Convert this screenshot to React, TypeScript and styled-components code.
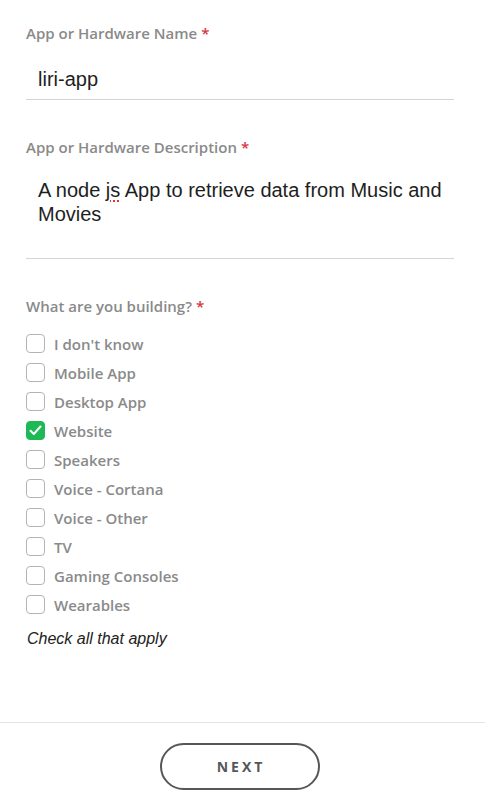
import React from "react";
import styled, { createGlobalStyle } from "styled-components";

const GlobalStyle = createGlobalStyle`
  html, body {
    margin: 0;
    padding: 0;
    background: #ffffff;
  }
  body {
    font-family: "Open Sans", "Liberation Sans", Arial, sans-serif;
    -webkit-font-smoothing: antialiased;
  }
`;

const Page = styled.div`
  width: 485px;
  height: 795px;
  display: flex;
  flex-direction: column;
  overflow: hidden;
`;

const Form = styled.form`
  display: flex;
  flex-direction: column;
  padding: 23px 31px 0 26px;
`;

const Field = styled.div<{ $gap?: number }>`
  display: flex;
  flex-direction: column;
  margin-top: ${(p) => p.$gap ?? 0}px;
`;

const Label = styled.label`
  font-size: 15px;
  line-height: 20px;
  font-weight: 600;
  color: #8a8a8a;
`;

const Required = styled.span`
  color: #d6343c;
  margin-left: 4px;
`;

const Input = styled.div`
  padding: 24px 12px 8px;
  font-family: "Liberation Sans", Arial, sans-serif;
  font-size: 20px;
  line-height: 24px;
  color: #1e1e1e;
  border-bottom: 1px solid #d4d4d4;
`;

const TextArea = styled(Input)`
  padding: 21px 12px 32px;
`;

const Misspelled = styled.span`
  text-decoration: underline dotted #e0353b;
  text-decoration-thickness: 2px;
  text-underline-offset: 3px;
`;

const OptionList = styled.ul`
  list-style: none;
  margin: 13px 0 0;
  padding: 0;
  display: flex;
  flex-direction: column;
`;

const Option = styled.li`
  display: flex;
  align-items: center;
  gap: 9px;
  height: 29px;
  font-size: 15px;
  font-weight: 600;
  color: #8a8a8a;
`;

const Box = styled.span<{ $checked?: boolean }>`
  width: 19px;
  height: 19px;
  box-sizing: border-box;
  border-radius: 4px;
  border: 1px solid ${(p) => (p.$checked ? "#1db954" : "#b4b4b4")};
  background: ${(p) => (p.$checked ? "#1db954" : "#ffffff")};
  display: flex;
  align-items: center;
  justify-content: center;
  flex-shrink: 0;
`;

const Helper = styled.p`
  margin: 10px 0 0 1px;
  font-family: "Liberation Sans", Arial, sans-serif;
  font-size: 16px;
  line-height: 20px;
  font-style: italic;
  color: #222222;
`;

const Footer = styled.div`
  margin-top: auto;
  border-top: 1px solid #e4e4e4;
  padding: 20px 6px 0 0;
  height: 52px;
  display: flex;
  justify-content: center;
  align-items: flex-start;
`;

const NextButton = styled.button`
  width: 160px;
  height: 47px;
  border: 2px solid #55575a;
  border-radius: 24px;
  background: #ffffff;
  color: #55575a;
  font-family: "Open Sans", "Liberation Sans", Arial, sans-serif;
  font-size: 14px;
  font-weight: 700;
  letter-spacing: 3px;
  padding: 0 0 0 3px;
  cursor: pointer;
`;

const options = [
  "I don't know",
  "Mobile App",
  "Desktop App",
  "Website",
  "Speakers",
  "Voice - Cortana",
  "Voice - Other",
  "TV",
  "Gaming Consoles",
  "Wearables",
];

function Check() {
  return (
    <svg width="13" height="11" viewBox="0 0 13 11" fill="none">
      <path
        d="M1.5 5.8 L4.8 9 L11.5 1.5"
        stroke="#ffffff"
        strokeWidth="2"
        strokeLinecap="round"
        strokeLinejoin="round"
      />
    </svg>
  );
}

export default function App() {
  const [checked] = React.useState<string[]>(["Website"]);

  return (
    <Page>
      <GlobalStyle />
      <Form>
        <Field>
          <Label>
            App or Hardware Name<Required>*</Required>
          </Label>
          <Input>liri-app</Input>
        </Field>

        <Field $gap={37}>
          <Label>
            App or Hardware Description<Required>*</Required>
          </Label>
          <TextArea>
            A node <Misspelled>js</Misspelled> App to retrieve data from Music
            and Movies
          </TextArea>
        </Field>

        <Field $gap={37}>
          <Label>
            What are you building?<Required>*</Required>
          </Label>
          <OptionList>
            {options.map((o) => {
              const on = checked.includes(o);
              return (
                <Option key={o}>
                  <Box $checked={on}>{on && <Check />}</Box>
                  {o}
                </Option>
              );
            })}
          </OptionList>
          <Helper>Check all that apply</Helper>
        </Field>
      </Form>
      <Footer>
        <NextButton type="button">NEXT</NextButton>
      </Footer>
    </Page>
  );
}
